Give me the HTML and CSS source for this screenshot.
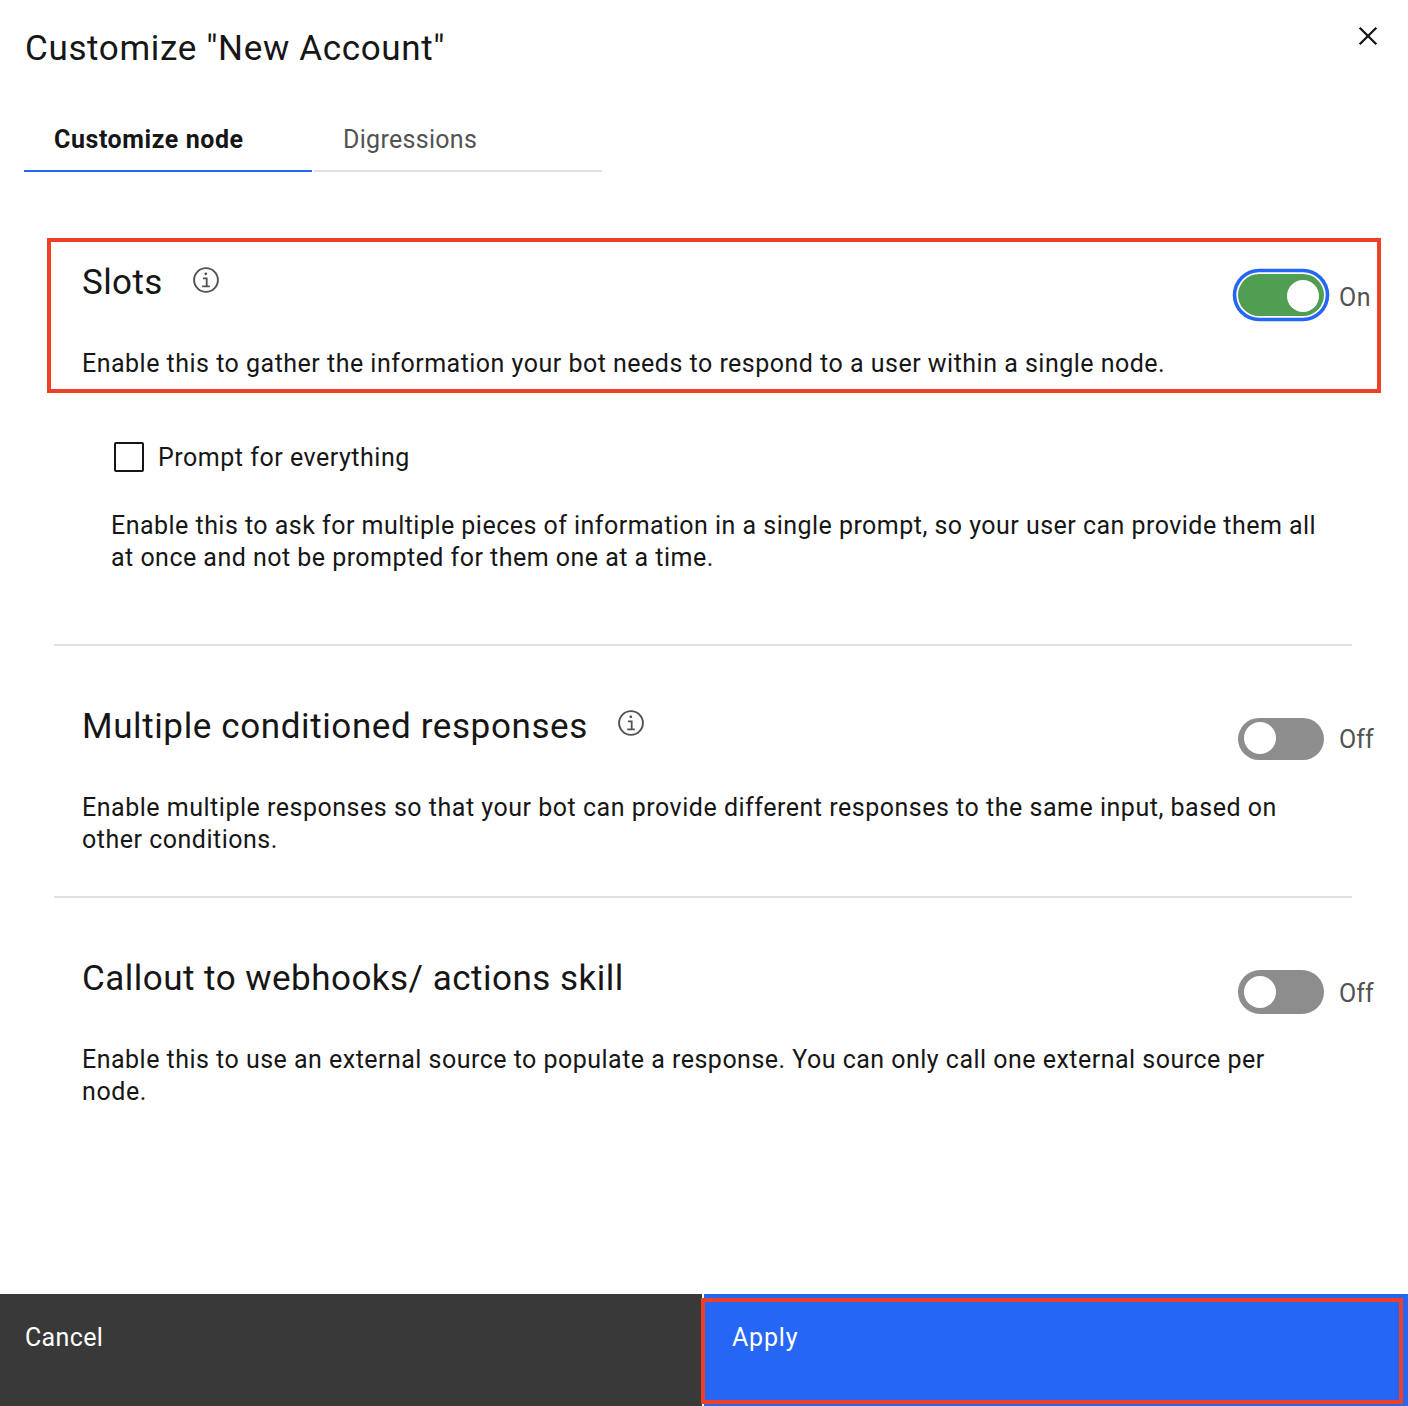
FILE: index.html
```html
<!DOCTYPE html>
<html lang="en">
<head>
<meta charset="utf-8">
<title>Customize node</title>
<link rel="stylesheet" href="styles.css">
</head>
<body>
<div class="modal">
  <header class="header">
    <h1 class="title heading">Customize "New Account"</h1>
    <button class="close" aria-label="Close"><svg width="20" height="20" viewBox="0 0 20 20"><path d="M1.7 1.7 18.3 18.3M18.3 1.7 1.7 18.3" fill="none" stroke="#161616" stroke-width="2.3"/></svg></button>
  </header>
  <nav class="tabs">
    <a class="tab tab-active">Customize node</a>
    <a class="tab">Digressions</a>
  </nav>
  <main class="content">
    <section class="option option-slots">
      <div class="option-text">
        <div class="option-head"><h2 class="heading h-slots">Slots</h2>
          <svg class="info" width="26" height="26" viewBox="0 0 26 26"><circle cx="13" cy="13" r="11.9" fill="none" stroke="#525252" stroke-width="1.9"/><circle cx="12.8" cy="6.8" r="1.4" fill="#525252"/><path d="M10 11.3h3.7v8M9.2 19.3h7.6" fill="none" stroke="#525252" stroke-width="1.8"/></svg>
        </div>
        <p class="d-slots">Enable this to gather the information your bot needs to respond to a user within a single node.</p>
      </div>
      <div class="switch switch-on"><span class="track"><span class="knob"></span></span><span class="state s-on">On</span></div>
    </section>
    <div class="prompt">
      <label class="check"><span class="box"></span><span class="c-label">Prompt for everything</span></label>
      <p><span class="p-one">Enable this to ask for multiple pieces of information in a single prompt, so your user can provide them all</span><br><span class="p-two">at once and not be prompted for them one at a time.</span></p>
    </div>
    <section class="option option-multi">
      <div class="option-text">
        <div class="option-head"><h2 class="heading h-multi">Multiple conditioned responses</h2>
          <svg class="info" width="26" height="26" viewBox="0 0 26 26"><circle cx="13" cy="13" r="11.9" fill="none" stroke="#525252" stroke-width="1.9"/><circle cx="12.8" cy="6.8" r="1.4" fill="#525252"/><path d="M10 11.3h3.7v8M9.2 19.3h7.6" fill="none" stroke="#525252" stroke-width="1.8"/></svg>
        </div>
        <p><span class="m-one">Enable multiple responses so that your bot can provide different responses to the same input, based on</span><br><span class="m-two">other conditions.</span></p>
      </div>
      <div class="switch switch-multi"><span class="track"><span class="knob"></span></span><span class="state">Off</span></div>
    </section>
    <section class="option option-callout">
      <div class="option-text">
        <div class="option-head"><h2 class="heading h-callout">Callout to webhooks/ actions skill</h2></div>
        <p><span class="k-one">Enable this to use an external source to populate a response. You can only call one external source per</span><br><span class="k-two">node.</span></p>
      </div>
      <div class="switch switch-callout"><span class="track"><span class="knob"></span></span><span class="state">Off</span></div>
    </section>
  </main>
  <footer class="footer">
    <button class="btn btn-cancel"><span>Cancel</span></button>
    <button class="btn btn-apply"><span>Apply</span></button>
  </footer>
</div>
</body>
</html>
```
FILE: styles.css
```css
*, *::after { box-sizing: border-box; }
body {
  margin: 0;
  background: #fff;
  color: #161616;
  font-family: Roboto, "Liberation Sans", sans-serif;
  font-size: 25px;
  line-height: 32px;
  letter-spacing: 0.48px;
}
h1, h2, p { margin: 0; }
button { border: 0; padding: 0; font: inherit; letter-spacing: inherit; text-align: left; }
.modal { height: 1406px; display: flex; flex-direction: column; overflow: hidden; }
.heading { font-size: 35px; font-weight: 400; line-height: 50px; letter-spacing: 0.65px; white-space: nowrap; }
.h-slots { letter-spacing: 0.4px; }
.h-multi { letter-spacing: 0.61px; }
.h-callout { letter-spacing: 0.48px; }

.header { display: flex; justify-content: space-between; align-items: flex-start; height: 108px; padding: 24px 30px 0 25px; }
.close { display: flex; width: 20px; height: 20px; margin-top: 2px; background: none; }

.tabs { display: flex; gap: 2px; padding-left: 24px; }
.tab { width: 288px; height: 64px; padding: 16px 0 0 29px; border-bottom: 2px solid #e0e0e0; color: #525252; letter-spacing: 0.3px; }
.tab-active { padding-left: 30px; border-color: #2566f5; color: #161616; font-weight: 700; letter-spacing: 0.57px; }

.content { flex: 1; padding: 66px 27px 0 47px; }
.option { display: flex; justify-content: space-between; }
.option-text { flex: none; }
.option-text p { white-space: nowrap; }
.option-head { display: flex; align-items: flex-start; gap: 30px; height: 48px; margin-bottom: 42px; }
.info { display: block; margin-top: 9px; }
.option-slots { height: 155px; border: 4px solid #ee4027; padding: 16px 0 0 31px; }
.option-multi .info { margin-top: 8px; }
.d-slots { letter-spacing: 0.49px; }
.p-one, .p-two { letter-spacing: 0.47px; }
.m-one { letter-spacing: 0.513px; }
.m-two { letter-spacing: 0.5px; }
.k-two { letter-spacing: 0.6px; }

.switch { display: flex; align-items: flex-start; gap: 15px; flex: none; width: 0; justify-content: flex-end; color: #525252; }
.track { flex: none; width: 86px; height: 42px; border-radius: 21px; background: #8d8d8d; padding: 4px 6px; }
.knob { display: block; width: 32px; height: 32px; border-radius: 50%; background: #fff; }
.state { flex: none; width: 38px; letter-spacing: 0; }
.switch-on { padding-top: 16px; }
.switch-on .track { background: #509e52; padding: 6px 5px 6px 49px; box-shadow: 0 0 0 1.7px #fff, 0 0 0 5.3px #2566f5; }
.s-on { padding-top: 8px; letter-spacing: 0.5px; }

.prompt { padding: 49px 0 0 64px; height: 251px; white-space: nowrap; }
.check { display: flex; align-items: flex-start; gap: 14px; height: 32px; margin-bottom: 36px; }
.box { width: 30px; height: 30px; margin-left: 3px; border: 2px solid #161616; border-radius: 2px; }
.c-label { letter-spacing: 0.52px; }

.option-multi, .option-callout { margin: 0 29px 0 7px; border-top: 2px solid #e0e0e0; padding: 56px 0 0 28px; height: 252px; }
.switch-multi, .switch-callout { padding-top: 16px; margin-right: -25px; }
.switch-multi .state { padding-top: 6px; }
.switch-callout .track { height: 44px; border-radius: 22px; padding-top: 6px; }
.switch-callout .state { padding-top: 8px; }

.footer { display: grid; grid-template-columns: 702px 704px; gap: 2px; height: 112px; flex: none; }
.btn { display: flex; align-items: flex-start; color: #fff; padding-top: 28px; }
.btn-cancel { background: #393939; padding-left: 25px; letter-spacing: 0.35px; }
.btn-apply { position: relative; background: #2566f5; padding-left: 28px; letter-spacing: 0.8px; }
.btn-apply::after { content: ""; position: absolute; left: -3px; top: 4px; width: 702px; height: 106px; border: 4px solid #ee4027; }
```
